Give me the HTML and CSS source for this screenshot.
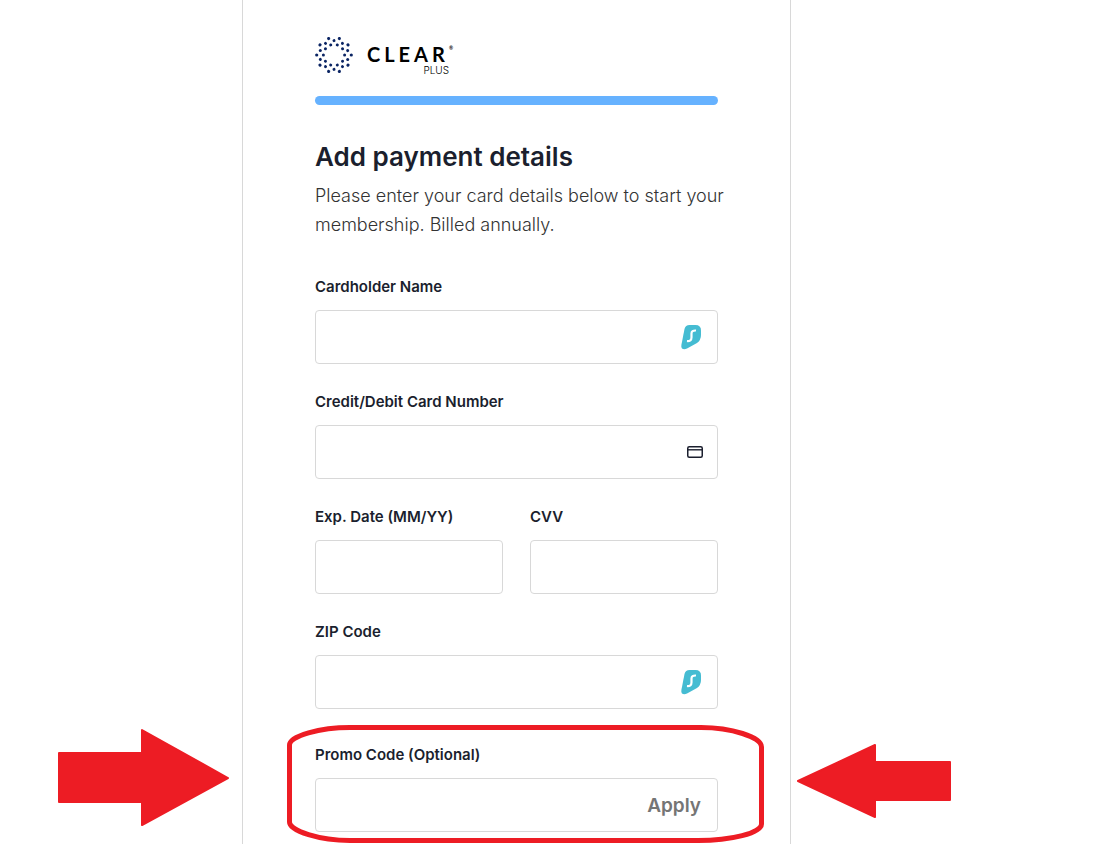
FILE: index.html
```html
<!DOCTYPE html>
<html lang="en">
<head>
  <meta charset="UTF-8">
  <meta name="viewport" content="width=device-width, initial-scale=1.0">
  <title>Add payment details</title>
  <link rel="stylesheet" href="styles.css">
</head>
<body>
  <!-- shared icon, used by the name and ZIP fields -->
  <svg class="sprite" aria-hidden="true">
    <symbol id="shark" viewBox="0 0 20 26">
      <path fill="#45bcd2" d="M8.500 1H14.500Q20 1 20 6.500V11Q20 16 16 19L6 24.500Q3 26 1 24.500Q0 23.500 .4 21L3.500 5Q4.500 1 8.500 1Z"/>
      <path fill="none" stroke="#fff" stroke-width="2.200" d="M15 6.500C12 6.300 10.500 7.500 10.500 9.500V13.500C10.500 16 9 17.300 6 17"/>
    </symbol>
  </svg>

  <main class="panel">
    <header class="logo">
      <svg class="logo-mark" viewBox="-19 -19 38 38" fill="#0a2463" aria-hidden="true">
        <g id="arm">
          <circle cx="17.300" cy="0" r="1.600"/>
          <circle cx="10.600" cy="0" r="1.500"/>
          <circle cx="13.700" cy="4.450" r="1.500"/>
        </g>
        <use href="#arm" transform="rotate(36)"/>
        <use href="#arm" transform="rotate(72)"/>
        <use href="#arm" transform="rotate(108)"/>
        <use href="#arm" transform="rotate(144)"/>
        <use href="#arm" transform="rotate(180)"/>
        <use href="#arm" transform="rotate(216)"/>
        <use href="#arm" transform="rotate(252)"/>
        <use href="#arm" transform="rotate(288)"/>
        <use href="#arm" transform="rotate(324)"/>
      </svg>
      <div class="logo-text">
        <div class="logo-name">CLEAR<sup>®</sup></div>
        <div class="logo-plus">PLUS</div>
      </div>
    </header>

    <div class="progress"></div>

    <h1>Add payment details</h1>
    <p class="intro">Please enter your card details below to start your membership. Billed annually.</p>

    <form>
      <div class="field">
        <label for="name">Cardholder Name</label>
        <div class="box">
          <input type="text" id="name">
          <svg class="shark" aria-hidden="true"><use href="#shark"/></svg>
        </div>
      </div>

      <div class="field">
        <label for="card">Credit/Debit Card Number</label>
        <div class="box">
          <input type="text" id="card" inputmode="numeric">
          <svg class="card-icon" viewBox="0 0 16 12" fill="none" stroke="#1b1f2e" aria-hidden="true">
            <rect x=".75" y=".75" width="14.500" height="10.500" rx="1.500" stroke-width="1.500"/>
            <path d="M1 3.800H15" stroke-width="1.400"/>
          </svg>
        </div>
      </div>

      <div class="row">
        <div class="field">
          <label for="exp">Exp. Date (MM/YY)</label>
          <div class="box"><input type="text" id="exp"></div>
        </div>
        <div class="field">
          <label for="cvv">CVV</label>
          <div class="box"><input type="text" id="cvv"></div>
        </div>
      </div>

      <div class="field">
        <label for="zip">ZIP Code</label>
        <div class="box">
          <input type="text" id="zip">
          <svg class="shark" aria-hidden="true"><use href="#shark"/></svg>
        </div>
      </div>

      <div class="field promo">
        <label for="promo">Promo Code (Optional)</label>
        <div class="box">
          <input type="text" id="promo">
          <button type="button" class="apply">Apply</button>
        </div>

        <!-- red callout around the promo field -->
        <svg class="ring" viewBox="0 0 478 118" fill="none" stroke="#ed1c24" stroke-width="5" aria-hidden="true">
          <path d="M63 2.500H414C444 2.500 474.500 12 474.500 22V99C474.500 108 444 115.500 411 115.500H63C33 115.500 2.500 106 2.500 97V20C2.500 11 33 2.500 63 2.500Z"/>
        </svg>
        <svg class="arrow arrow-left" viewBox="0 0 172 98" fill="#ed1c24" stroke="#ed1c24" stroke-width="2" stroke-linejoin="round" aria-hidden="true">
          <path d="M1 24H84V1L170 49L84 96V73H1Z"/>
        </svg>
        <svg class="arrow arrow-right" viewBox="0 0 155 74" fill="#ed1c24" stroke="#ed1c24" stroke-width="2" stroke-linejoin="round" aria-hidden="true">
          <path d="M154 18H79V1L2 37L79 73V56H154Z"/>
        </svg>
      </div>
    </form>
  </main>
</body>
</html>
```

FILE: styles.css
```css
* {
  box-sizing: border-box;
}
body {
  margin: 0;
  padding-right: 70px;
  background: #fff;
  color: #1b1f2e;
  font-family: Inter, "Liberation Sans", sans-serif;
  font-size: 16px;
}
.sprite {
  display: none;
}
.panel {
  max-width: 549px;
  min-height: 100vh;
  margin: 0 auto;
  padding: 36px 72px 12px;
  border-left: 1px solid #d8d8d8;
  border-right: 1px solid #d8d8d8;
}
.logo {
  display: flex;
  gap: 14px;
  height: 38px;
}
.logo-mark {
  width: 38px;
  height: 38px;
}
.logo-text {
  padding-top: 7px;
  color: #000;
}
.logo-name {
  display: flex;
  font-family: Lato, sans-serif;
  font-size: 20px;
  font-weight: 700;
  line-height: 22px;
  letter-spacing: 4px;
}
.logo-name sup {
  font-size: 5px;
  line-height: 10px;
  letter-spacing: 0;
}
.logo-plus {
  font-size: 10px;
  font-weight: 300;
  line-height: 10px;
  text-align: right;
  padding-right: 4px;
}
.progress {
  height: 9px;
  margin-top: 22px;
  border-radius: 5px;
  background: #66b2ff;
}
h1 {
  margin: 35px 0 0;
  font-size: 26px;
  font-weight: 600;
  line-height: 34px;
}
.intro {
  margin: 7px -8px 36px 0;
  color: #333;
  font-size: 18px;
  font-weight: 300;
  line-height: 29px;
}
.field {
  min-width: 0;
  margin-bottom: 26px;
}
label {
  display: block;
  margin-bottom: 11px;
  font-size: 15px;
  font-weight: 600;
  line-height: 24px;
}
.box {
  display: flex;
  align-items: center;
  height: 54px;
  padding-right: 16px;
  border: 1px solid #d8d8d8;
  border-radius: 4px;
}
.box input {
  flex: 1;
  min-width: 0;
  height: 100%;
  padding: 0 16px;
  border: 0;
  outline: 0;
  background: none;
  font: inherit;
  color: inherit;
}
.shark {
  width: 20px;
  height: 26px;
}
.card-icon {
  width: 16px;
  height: 12px;
  margin-right: -2px;
}
.row {
  display: grid;
  grid-template-columns: 1fr 1fr;
  gap: 27px;
}
.apply {
  padding: 0;
  border: 0;
  background: none;
  color: #757575;
  font: 600 19px Inter, sans-serif;
  cursor: pointer;
}
.promo {
  position: relative;
  margin: 34px 0 0;
}
.ring,
.arrow {
  position: absolute;
  pointer-events: none;
}
.ring {
  top: -18px;
  left: -28px;
  width: 478px;
  height: 118px;
}
.arrow-left {
  top: -14px;
  right: calc(100% + 85px);
  width: 172px;
  height: 98px;
}
.arrow-right {
  top: 1px;
  left: calc(100% + 78px);
  width: 155px;
  height: 74px;
}
```
